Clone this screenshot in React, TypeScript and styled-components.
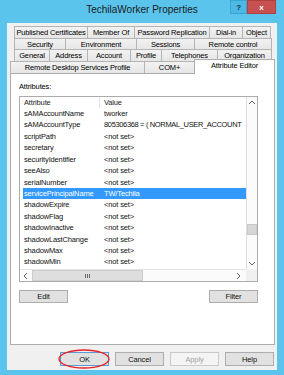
import React from "react";
import styled, { createGlobalStyle } from "styled-components";

const GlobalStyle = createGlobalStyle`
  html, body { margin: 0; padding: 0; }
  body {
    font-family: "Liberation Sans", Arial, sans-serif;
    font-size: 7.5px;
    letter-spacing: -0.15px;
    color: #000;
  }
  * { box-sizing: border-box; }
`;

const Frame = styled.div`
  width: 284px;
  height: 375px;
  background: #5bc4ec;
  display: flex;
  flex-direction: column;
  overflow: hidden;
`;

const TitleBar = styled.div`
  height: 23px;
  flex: none;
  display: grid;
  grid-template-columns: 1fr auto 1fr;
  align-items: start;
`;

const Title = styled.div`
  grid-column: 2;
  padding-top: 4px;
  font-size: 10px;
  letter-spacing: 0;
  line-height: 12px;
  color: #1a1a1a;
`;

const Captions = styled.div`
  grid-column: 3;
  justify-self: end;
  display: flex;
  margin-right: 8px;
`;

const CaptionButton = styled.div<{ $w: number; $close?: boolean }>`
  width: ${(p) => p.$w}px;
  height: 14px;
  display: flex;
  align-items: center;
  justify-content: center;
  font-weight: bold;
  font-size: 8px;
  background: ${(p) => (p.$close ? "#c75050" : "#4cb8e4")};
  color: ${(p) => (p.$close ? "#fff" : "#10304a")};
  border: 1px solid ${(p) => (p.$close ? "#b04040" : "#3aa4d2")};
`;

const Body = styled.div`
  flex: 1;
  margin: 0 7px 5px;
  background: #f0f0f0;
  display: flex;
  flex-direction: column;
  padding: 3px 2px 0 3px;
`;

const TabRow = styled.div<{ $h: number; $front?: boolean }>`
  display: flex;
  height: ${(p) => p.$h}px;
  margin: ${(p) => (p.$front ? "0" : "0 3px 0 4px")};
`;

const Tab = styled.div<{ $w: number; $active?: boolean }>`
  width: ${(p) => p.$w}px;
  flex: none;
  display: flex;
  align-items: center;
  justify-content: center;
  white-space: nowrap;
  border: 1px solid #b4b4b4;
  border-bottom: none;
  margin-left: -1px;
  &:first-child { margin-left: 0; }
  background: ${(p) => (p.$active ? "#fff" : "linear-gradient(#f2f2f2, #e6e6e6)")};
  ${(p) =>
    p.$active &&
    `
    position: relative;
    z-index: 1;
    margin-top: -2px;
    margin-bottom: -1px;
    padding-bottom: 3px;
    border-color: #adadad;
  `}
`;

const Page = styled.div`
  height: 272px;
  border: 1px solid #adadad;
  background: #fff;
  padding: 8px 0 0 8px;
  display: flex;
  flex-direction: column;
`;

const Label = styled.div`
  line-height: 10px;
  height: 10px;
  margin-bottom: 4px;
`;

const ListBox = styled.div`
  width: 239px;
  height: 186px;
  border: 1px solid #acacac;
  display: grid;
  grid-template-columns: 226px 11px;
  grid-template-rows: 172px 12px;
`;

const ListMain = styled.div`
  overflow: hidden;
  display: flex;
  flex-direction: column;
`;

const Header = styled.div`
  height: 11px;
  flex: none;
  display: flex;
  line-height: 11px;
`;

const HeadCell = styled.div<{ $w?: number }>`
  width: ${(p) => (p.$w ? `${p.$w}px` : "auto")};
  flex: ${(p) => (p.$w ? "none" : "1")};
  padding-left: 4px;
  border-right: ${(p) => (p.$w ? "1px solid #e3e3e3" : "none")};
  color: #1e1e1e;
`;

const Row = styled.div<{ $sel?: boolean }>`
  height: 11.43px;
  flex: none;
  display: flex;
  margin-left: 3px;
  line-height: 11.43px;
  white-space: nowrap;
  background: ${(p) => (p.$sel ? "#3399ff" : "transparent")};
  color: ${(p) => (p.$sel ? "#fff" : "#111")};
`;

const Cell = styled.div<{ $first?: boolean; $tight?: boolean }>`
  width: ${(p) => (p.$first ? "77px" : "auto")};
  flex: ${(p) => (p.$first ? "none" : "1")};
  padding-left: ${(p) => (p.$first ? "1px" : "4px")};
  letter-spacing: ${(p) => (p.$tight ? "-0.35px" : "inherit")};
  overflow: hidden;
`;

const VScroll = styled.div`
  background: #fbfbfb;
  border-left: 1px solid #dedede;
  display: flex;
  flex-direction: column;
`;

const HScroll = styled.div`
  background: #fbfbfb;
  border-top: 1px solid #e4e4e4;
  display: flex;
`;

const ArrowBox = styled.div<{ $w?: number; $h?: number }>`
  width: ${(p) => (p.$w ? `${p.$w}px` : "100%")};
  height: ${(p) => (p.$h ? `${p.$h}px` : "100%")};
  flex: none;
  display: flex;
  align-items: center;
  justify-content: center;
`;

const VTrack = styled.div`
  flex: 1;
`;

const VThumb = styled.div`
  margin-top: 116px;
  height: 11px;
  background: #d6d6d6;
  border: 1px solid #c9c9c9;
`;

const HThumb = styled.div`
  width: 111px;
  flex: none;
  background: #dedede;
  border: 1px solid #cdcdcd;
  display: flex;
  align-items: center;
  justify-content: center;
  gap: 1px;
`;

const Grip = styled.span`
  width: 1px;
  height: 4px;
  background: #6a6a6a;
`;

const HTrack = styled.div`
  flex: 1;
`;

const Corner = styled.div`
  background: #f0f0f0;
`;

const ActionRow = styled.div`
  width: 239px;
  margin-top: 8px;
  display: flex;
  justify-content: space-between;
`;

const Button = styled.div<{ $disabled?: boolean; $default?: boolean }>`
  width: 49px;
  height: 14px;
  flex: none;
  display: flex;
  align-items: center;
  justify-content: center;
  background: ${(p) => (p.$disabled ? "#f4f4f4" : "#e1e1e1")};
  border: 1px solid
    ${(p) => (p.$disabled ? "#cacaca" : p.$default ? "#5a9bd3" : "#adadad")};
  color: ${(p) => (p.$disabled ? "#a3a3a3" : "#111")};
`;

const SmallButton = styled(Button)`
  height: 13px;
`;

const DialogButtons = styled.div`
  margin-top: 7px;
  margin-right: 1px;
  display: flex;
  justify-content: flex-end;
  gap: 6px;
`;

const Marked = styled.div`
  position: relative;
`;

const Ellipse = styled.svg`
  position: absolute;
  left: -2px;
  top: -3px;
  width: 52px;
  height: 20px;
  overflow: visible;
  pointer-events: none;
`;

const tabRows: { h: number; front?: boolean; tabs: [string, number][] }[] = [
  {
    h: 12,
    tabs: [
      ["Published Certificates", 74],
      ["Member Of", 48],
      ["Password Replication", 76],
      ["Dial-in", 34],
      ["Object", 29],
    ],
  },
  {
    h: 11,
    tabs: [
      ["Security", 52],
      ["Environment", 72],
      ["Sessions", 59],
      ["Remote control", 78],
    ],
  },
  {
    h: 12,
    tabs: [
      ["General", 36],
      ["Address", 39],
      ["Account", 44],
      ["Profile", 32],
      ["Telephones", 57],
      ["Organization", 55],
    ],
  },
  {
    h: 12,
    front: true,
    tabs: [
      ["Remote Desktop Services Profile", 135],
      ["COM+", 51],
      ["Attribute Editor", 81],
    ],
  },
];

const attributes: [string, string][] = [
  ["sAMAccountName", "tworker"],
  ["sAMAccountType", "805306368 = ( NORMAL_USER_ACCOUNT"],
  ["scriptPath", "<not set>"],
  ["secretary", "<not set>"],
  ["securityIdentifier", "<not set>"],
  ["seeAlso", "<not set>"],
  ["serialNumber", "<not set>"],
  ["servicePrincipalName", "TW/Techila"],
  ["shadowExpire", "<not set>"],
  ["shadowFlag", "<not set>"],
  ["shadowInactive", "<not set>"],
  ["shadowLastChange", "<not set>"],
  ["shadowMax", "<not set>"],
  ["shadowMin", "<not set>"],
];

const Chevron: React.FC<{ dir: "up" | "down" | "left" | "right" }> = ({ dir }) => {
  const pts = {
    up: "1,5 4,2 7,5",
    down: "1,2 4,5 7,2",
    left: "5,1 2,4 5,7",
    right: "2,1 5,4 2,7",
  }[dir];
  return (
    <svg width="8" height="8" viewBox="0 0 8 8">
      <polyline points={pts} fill="none" stroke="#606060" strokeWidth="1" />
    </svg>
  );
};

export default function App() {
  return (
    <>
      <GlobalStyle />
      <Frame>
        <TitleBar>
          <Title>TechilaWorker Properties</Title>
          <Captions>
            <CaptionButton $w={17}>?</CaptionButton>
            <CaptionButton $w={29} $close>
              x
            </CaptionButton>
          </Captions>
        </TitleBar>
        <Body>
          {tabRows.map((row, i) => (
            <TabRow key={i} $h={row.h} $front={row.front}>
              {row.tabs.map(([name, w]) => (
                <Tab key={name} $w={w} $active={name === "Attribute Editor"}>
                  {name}
                </Tab>
              ))}
            </TabRow>
          ))}
          <Page>
            <Label>Attributes:</Label>
            <ListBox>
              <ListMain>
                <Header>
                  <HeadCell $w={80}>Attribute</HeadCell>
                  <HeadCell>Value</HeadCell>
                </Header>
                {attributes.map(([name, value]) => (
                  <Row key={name} $sel={name === "servicePrincipalName"}>
                    <Cell $first>{name}</Cell>
                    <Cell $tight={value.length > 20}>{value}</Cell>
                  </Row>
                ))}
              </ListMain>
              <VScroll>
                <ArrowBox $h={11}>
                  <Chevron dir="up" />
                </ArrowBox>
                <VTrack>
                  <VThumb />
                </VTrack>
                <ArrowBox $h={11}>
                  <Chevron dir="down" />
                </ArrowBox>
              </VScroll>
              <HScroll>
                <ArrowBox $w={12}>
                  <Chevron dir="left" />
                </ArrowBox>
                <HThumb>
                  <Grip />
                  <Grip />
                  <Grip />
                </HThumb>
                <HTrack />
                <ArrowBox $w={14}>
                  <Chevron dir="right" />
                </ArrowBox>
              </HScroll>
              <Corner />
            </ListBox>
            <ActionRow>
              <SmallButton>Edit</SmallButton>
              <SmallButton>Filter</SmallButton>
            </ActionRow>
          </Page>
          <DialogButtons>
            <Marked>
              <Button $default>OK</Button>
              <Ellipse viewBox="0 0 52 20">
                <ellipse cx="26" cy="10" rx="25" ry="9" fill="none" stroke="#e3242b" strokeWidth="1.3" />
              </Ellipse>
            </Marked>
            <Button>Cancel</Button>
            <Button $disabled>Apply</Button>
            <Button>Help</Button>
          </DialogButtons>
        </Body>
      </Frame>
    </>
  );
}
